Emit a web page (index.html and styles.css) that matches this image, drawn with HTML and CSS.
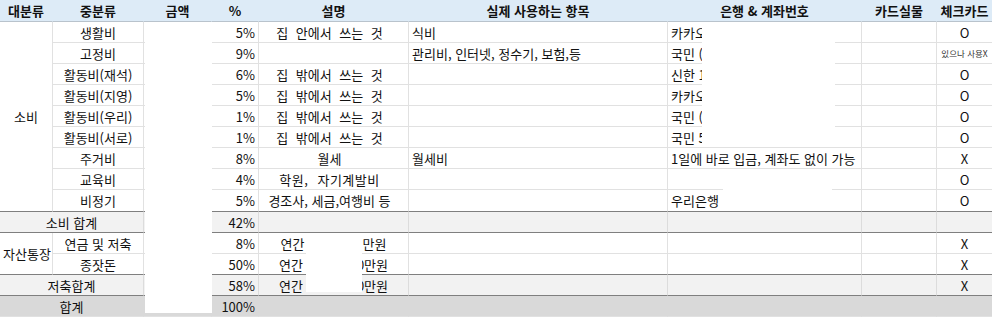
FILE: index.html
```html
<!DOCTYPE html>
<html lang="ko">
<head>
<meta charset="utf-8">
<title>예산표</title>
<link rel="stylesheet" href="styles.css">
</head>
<body>
<div class="sheet">
  <table class="grid">
    <colgroup>
      <col class="w-major"><col class="w-mid"><col class="w-amt"><col class="w-pct"><col class="w-desc"><col class="w-items"><col class="w-bank"><col class="w-card"><col class="w-check">
    </colgroup>
    <tr class="head">
      <th>대분류</th><th>중분류</th><th>금액</th><th>%</th><th>설명</th><th>실제 사용하는 항목</th><th>은행 &amp; 계좌번호</th><th>카드실물</th><th class="last">체크카드</th>
    </tr>
    <tr>
      <td class="c sep" rowspan="9">소비</td><td class="c">생활비</td><td></td><td class="r">5%</td><td class="desc wide">집 안에서 쓰는 것</td><td class="l">식비</td><td class="l"><span class="clip">카카오</span></td><td></td><td class="c last">O</td>
    </tr>
    <tr>
      <td class="c">고정비</td><td></td><td class="r">9%</td><td></td><td class="l">관리비, 인터넷, 정수기, 보험,등</td><td class="l"><span class="clip">국민 (</span></td><td></td><td class="c last tiny">있으나 사용X</td>
    </tr>
    <tr>
      <td class="c">활동비(재석)</td><td></td><td class="r">6%</td><td class="desc wide">집 밖에서 쓰는 것</td><td></td><td class="l"><span class="clip">신한 1</span></td><td></td><td class="c last">O</td>
    </tr>
    <tr>
      <td class="c">활동비(지영)</td><td></td><td class="r">5%</td><td class="desc wide">집 밖에서 쓰는 것</td><td></td><td class="l"><span class="clip">카카오</span></td><td></td><td class="c last">O</td>
    </tr>
    <tr>
      <td class="c">활동비(우리)</td><td></td><td class="r">1%</td><td class="desc wide">집 밖에서 쓰는 것</td><td></td><td class="l"><span class="clip">국민 (</span></td><td></td><td class="c last">O</td>
    </tr>
    <tr>
      <td class="c">활동비(서로)</td><td></td><td class="r">1%</td><td class="desc wide">집 밖에서 쓰는 것</td><td></td><td class="l"><span class="clip">국민 5</span></td><td></td><td class="c last">O</td>
    </tr>
    <tr>
      <td class="c">주거비</td><td></td><td class="r">8%</td><td class="desc">월세</td><td class="l">월세비</td><td class="l">1일에 바로 입금, 계좌도 없이 가능</td><td></td><td class="c last">X</td>
    </tr>
    <tr>
      <td class="c">교육비</td><td></td><td class="r">4%</td><td class="desc wider">학원, 자기계발비</td><td></td><td></td><td></td><td class="c last">O</td>
    </tr>
    <tr class="tall sep">
      <td class="c">비정기</td><td></td><td class="r">5%</td><td class="desc">경조사, 세금,여행비 등</td><td></td><td class="l">우리은행</td><td></td><td class="c last">O</td>
    </tr>
    <tr class="sub sep">
      <td class="c" colspan="2">소비 합계</td><td></td><td class="r">42%</td><td></td><td></td><td></td><td></td><td class="last"></td>
    </tr>
    <tr>
      <td class="c sep" rowspan="2">자산통장</td><td class="c">연금 및 저축</td><td></td><td class="r">8%</td><td class="c">연간<span class="gap"></span>만원</td><td></td><td></td><td></td><td class="c last">X</td>
    </tr>
    <tr class="sep">
      <td class="c">종잣돈</td><td></td><td class="r">50%</td><td class="c">연간<span class="gap gap2"></span>0만원</td><td></td><td></td><td></td><td class="c last">X</td>
    </tr>
    <tr class="sub sep">
      <td class="c" colspan="2">저축합계</td><td></td><td class="r">58%</td><td class="c">연간<span class="gap gap2"></span>0만원</td><td></td><td></td><td></td><td class="c last">X</td>
    </tr>
    <tr class="total">
      <td class="c" colspan="2">합계</td><td></td><td class="r">100%</td><td></td><td></td><td></td><td></td><td class="last"></td>
    </tr>
  </table>
  <div class="mask mask-amount"></div>
  <div class="mask mask-bank"></div>
  <div class="mask mask-bank2"></div>
  <div class="mask mask-desc"></div>
</div>
</body>
</html>
```
FILE: styles.css
```css
* { box-sizing: border-box; }
html, body { margin: 0; padding: 0; background: #fff; }
body {
  font-family: "Noto Sans CJK KR", "Noto Sans", sans-serif;
  font-size: 13px;
  color: #111;
}
.sheet { position: relative; width: 992px; height: 317px; overflow: hidden; }

.grid {
  border-collapse: separate;
  border-spacing: 0;
  table-layout: fixed;
  width: 992px;
}
.w-major { width: 53px; }
.w-mid { width: 91px; }
.w-amt { width: 68px; }
.w-pct { width: 47px; }
.w-desc { width: 150px; }
.w-items { width: 259px; }
.w-bank { width: 194px; }
.w-card { width: 75px; }
.w-check { width: 55px; }

.grid tr { height: 21px; }
.grid tr.head { height: 22px; }
.grid tr.tall { height: 22px; }

.grid td, .grid th {
  border-right: 1px solid #e1e1e1;
  border-bottom: 1px solid #e1e1e1;
  padding: 0 3px;
  white-space: nowrap;
  overflow: hidden;
  line-height: 19px;
  vertical-align: middle;
}
.grid th {
  background: #ddebf7;
  border-right-color: #ddebf7;
  border-bottom-color: #b9c3cc;
  font-weight: 700;
  text-align: center;
}
.grid .last { border-right: none; }

.c { text-align: center; }
.r { text-align: right; }
.l { text-align: left; }
.grid td.l { padding-left: 3px; }

.grid td.desc { text-align: center; padding: 0 8px 0 0; }
.wide { word-spacing: 4px; }
.wider { word-spacing: 5px; letter-spacing: 0.5px; }

.grid tr.sep > td, .grid td.sep { border-bottom-color: #7f7f7f; }

.sub td { background: #f2f2f2; border-right-color: #dcdcdc; }
.total td { background: #d9d9d9; border-right-color: #d9d9d9; }

.tiny { font-size: 8.5px; color: #333; }
.grid td.tiny { padding: 0; }

.clip {
  display: inline-block;
  width: 32px;
  overflow: hidden;
  vertical-align: top;
  white-space: nowrap;
}

.gap { display: inline-block; width: 58px; }
.gap2 { width: 54px; }

.mask { position: absolute; background: #fff; }
.mask-amount { left: 145px; top: 22px; width: 67px; height: 291px; }
.mask-bank { left: 702px; top: 22px; width: 133px; height: 124px; }
.mask-bank2 { left: 723px; top: 172px; width: 109px; height: 24px; }
.mask-desc { left: 306px; top: 234px; width: 56px; height: 58px; }
```
